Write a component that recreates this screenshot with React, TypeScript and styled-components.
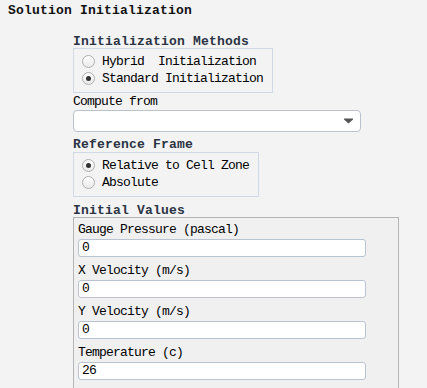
import React, { FC } from 'react'
import styled, { createGlobalStyle } from 'styled-components'

const GlobalStyle = createGlobalStyle`
    html, body {
        margin: 0;
        padding: 0;
        background: #f3f3f3;
        overflow: hidden;
    }
    body {
        font-family: "Liberation Mono", "DejaVu Sans Mono", monospace;
        font-size: 13px;
        letter-spacing: -0.8px;
        color: #000;
    }
`

/* page layout */
const Page = styled.div`
    width: 427px;
    height: 388px;
    padding: 3px 0 0 8px;
    box-sizing: border-box;
    overflow: hidden;
`
const Title = styled.div`
    font-weight: bold;
    letter-spacing: 0.2px;
    line-height: 16px;
    height: 16px;
    color: #111;
`
const Body = styled.div`
    display: flex;
    flex-direction: column;
    align-items: flex-start;
    margin-left: 65px;
`
const Heading = styled.div<{ $top: number }>`
    font-weight: bold;
    letter-spacing: 0.2px;
    line-height: 13px;
    height: 13px;
    color: #2b3443;
    margin-top: ${p => p.$top}px;
`
const Label = styled.div<{ $top?: number }>`
    line-height: 14px;
    height: 14px;
    margin-top: ${p => p.$top || 0}px;
    white-space: pre;
`

/* radio group */
const RadioBox = styled.div<{ $width: number; $top?: number }>`
    box-sizing: border-box;
    width: ${p => p.$width}px;
    height: 45px;
    margin-top: ${p => p.$top || 0}px;
    border: 1px solid #d2d9e6;
    padding: 4px 0 0 8px;
    display: flex;
    flex-direction: column;
`
const RadioRow = styled.div`
    display: flex;
    align-items: center;
    gap: 7px;
    height: 17px;
    white-space: pre;
`
const RadioDot = styled.span<{ $checked?: boolean }>`
    width: 13px;
    height: 13px;
    box-sizing: border-box;
    border-radius: 50%;
    border: 1px solid #b0b0b0;
    background: linear-gradient(#ffffff, #e9e9e9);
    display: flex;
    align-items: center;
    justify-content: center;
    &::after {
        content: '';
        width: 5px;
        height: 5px;
        border-radius: 50%;
        background: #333;
        display: ${p => (p.$checked ? 'block' : 'none')};
    }
`

/* dropdown */
const Select = styled.div`
    box-sizing: border-box;
    width: 288px;
    height: 22px;
    margin-top: 1px;
    background: #fff;
    border: 1px solid #bac2cd;
    border-radius: 4px;
    display: flex;
    align-items: center;
    justify-content: flex-end;
    padding-right: 7px;
`

/* values panel */
const ValuesBox = styled.div`
    box-sizing: border-box;
    width: 326px;
    height: 171px;
    border: 1px solid #b5b5b5;
    border-bottom: none;
    background: #f0f0f0;
    padding: 4px 0 0 4px;
    display: flex;
    flex-direction: column;
    overflow: hidden;
`
const Field = styled.div`
    display: flex;
    flex-direction: column;
    flex-shrink: 0;
    margin-bottom: 6px;
`
const FieldLabel = styled.div`
    line-height: 16px;
    height: 17px;
    white-space: pre;
`
const Input = styled.div`
    box-sizing: border-box;
    width: 288px;
    height: 18px;
    background: #fff;
    border: 1px solid #b9c3d1;
    border-radius: 3px;
    padding-left: 3px;
    line-height: 16px;
`

interface RadioProps {
    checked?: boolean
    label: string
}
const Radio: FC<RadioProps> = ({ checked, label }) => (
    <RadioRow>
        <RadioDot $checked={checked} />
        {label}
    </RadioRow>
)

const fields = [
    { label: 'Gauge Pressure (pascal)', value: '0' },
    { label: 'X Velocity (m/s)', value: '0' },
    { label: 'Y Velocity (m/s)', value: '0' },
    { label: 'Temperature (c)', value: '26' },
]

const App: FC = () => {
    return (
        <>
            <GlobalStyle />
            <Page>
                <Title>Solution Initialization</Title>
                <Body>
                    <Heading $top={16}>Initialization Methods</Heading>
                    <RadioBox $width={200}>
                        <Radio label="Hybrid  Initialization" />
                        <Radio checked label="Standard Initialization" />
                    </RadioBox>
                    <Label $top={2}>Compute from</Label>
                    <Select>
                        <svg width="9" height="6" viewBox="0 0 9 6">
                            <path d="M0 0.5 H9 V1.5 L4.5 5.5 L0 1.5 Z" fill="#555" />
                        </svg>
                    </Select>
                    <Heading $top={6}>Reference Frame</Heading>
                    <RadioBox $width={186} $top={1}>
                        <Radio checked label="Relative to Cell Zone" />
                        <Radio label="Absolute" />
                    </RadioBox>
                    <Heading $top={7}>Initial Values</Heading>
                    <ValuesBox>
                        {fields.map(f => (
                            <Field key={f.label}>
                                <FieldLabel>{f.label}</FieldLabel>
                                <Input>{f.value}</Input>
                            </Field>
                        ))}
                    </ValuesBox>
                </Body>
            </Page>
        </>
    )
}

export default App
